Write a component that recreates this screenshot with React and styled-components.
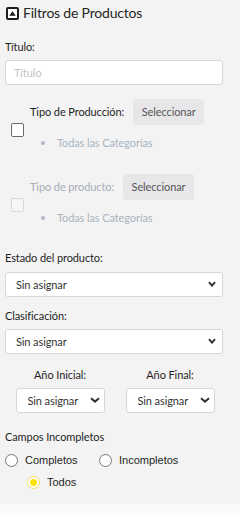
import React from "react";
import styled, { createGlobalStyle } from "styled-components";

const Global = createGlobalStyle`
  html, body { margin: 0; padding: 0; background: #fafafa; }
  body { font-family: Lato, "Noto Sans", sans-serif; }
  * { box-sizing: border-box; }
`;

const Panel = styled.div`
  width: 240px;
  height: 504px;
  background: #f3f3f3;
  display: flex;
  flex-direction: column;
  padding: 0 5px 0 5px;
  color: #1f1f1f;
  font-size: 11px;
  line-height: 14px;
  letter-spacing: -0.1px;
`;

const Header = styled.div`
  display: flex;
  align-items: center;
  gap: 4px;
  height: 26px;
  padding-left: 1px;
  font-size: 14px;
  letter-spacing: -0.2px;
  color: #262626;
`;

const IconBox = styled.span`
  width: 13px;
  height: 13px;
  border: 2px solid #1e1e1e;
  border-radius: 2px;
  display: flex;
  align-items: center;
  justify-content: center;
  background: #fff;
`;

const Label = styled.div`
  color: #1f1f1f;
  margin-top: ${(p) => p.$mt || 0}px;
  margin-bottom: ${(p) => p.$mb || 0}px;
`;

const TextInput = styled.input`
  width: 218px;
  height: 25px;
  border: 1px solid #d6d6d6;
  border-radius: 3px;
  background: #fff;
  padding: 0 8px;
  font-family: inherit;
  font-size: 11px;
  &::placeholder { color: #c4c4c4; }
`;

const Group = styled.div`
  display: flex;
  align-items: center;
  margin-top: ${(p) => p.$mt}px;
`;

const Check = styled.span`
  width: 13px;
  height: 14px;
  margin-left: 6px;
  margin-top: 11px;
  border: 1px solid ${(p) => (p.$disabled ? "#d8d8d8" : "#6a6a6a")};
  border-radius: 2px;
  background: ${(p) => (p.$disabled ? "#f6f6f6" : "#fff")};
  flex: none;
`;

const GroupBody = styled.div`
  display: flex;
  flex-direction: column;
  margin-left: 6px;
`;

const GroupHead = styled.div`
  display: flex;
  align-items: center;
  gap: 9px;
  color: ${(p) => (p.$disabled ? "#a8adb5" : "#1f1f1f")};
`;

const SelBtn = styled.span`
  display: inline-flex;
  align-items: center;
  justify-content: center;
  width: 71px;
  height: 26px;
  background: #e7e7ea;
  border-radius: 3px;
  color: #555;
`;

const Bullet = styled.div`
  display: flex;
  align-items: center;
  margin-top: 11px;
  color: #a9b3c0;
  &::before {
    content: "";
    width: 4px;
    height: 4px;
    border-radius: 50%;
    background: #b0b8c4;
    margin-left: 11px;
    margin-right: 12px;
  }
`;

const SelectWrap = styled.div`
  position: relative;
  width: ${(p) => p.$w}px;
`;

const Select = styled.select`
  appearance: none;
  -webkit-appearance: none;
  width: 100%;
  height: 25px;
  border: 1px solid #d6d6d6;
  border-radius: 3px;
  background: #fff;
  font-family: inherit;
  font-size: 11px;
  letter-spacing: -0.1px;
  color: #333;
  padding: 0 0 0 ${(p) => p.$pl || 10}px;
  outline: none;
`;

const Chevron = styled.svg`
  position: absolute;
  right: ${(p) => p.$r}px;
  top: 9px;
  pointer-events: none;
`;

const Years = styled.div`
  display: grid;
  grid-template-columns: 110px 110px;
  margin-top: 14px;
`;

const YearCol = styled.div`
  display: flex;
  flex-direction: column;
  align-items: center;
  gap: 6px;
`;

const Radios = styled.div`
  display: grid;
  grid-template-columns: 94px 100px;
  row-gap: 8px;
  margin-top: 9px;
  font-family: "Liberation Sans", Arial, sans-serif;
  font-size: 11px;
  letter-spacing: 0;
  color: #1f1f1f;
`;

const RadioItem = styled.label`
  display: flex;
  align-items: center;
  gap: 7px;
  grid-column: ${(p) => p.$col || "auto"};
  padding-left: ${(p) => p.$pl || 0}px;
`;

const RadioDot = styled.span`
  width: 13px;
  height: 13px;
  border-radius: 50%;
  border: 1px solid ${(p) => (p.$on ? "#f2dc5a" : "#777")};
  background: #fff;
  display: flex;
  align-items: center;
  justify-content: center;
  &::after {
    content: "";
    display: ${(p) => (p.$on ? "block" : "none")};
    width: 7px;
    height: 7px;
    border-radius: 50%;
    background: #ffe10a;
  }
`;

function SelectBox({ w, pl, r = 7, cw = 8 }) {
  return (
    <SelectWrap $w={w}>
      <Select $pl={pl} defaultValue="x">
        <option value="x">Sin asignar</option>
      </Select>
      <Chevron $r={r} width={cw} height="6" viewBox={`0 0 ${cw} 6`}>
        <path d={`M1 1.2 L${cw / 2} 4.6 L${cw - 1} 1.2`} fill="none" stroke="#333" strokeWidth="2" />
      </Chevron>
    </SelectWrap>
  );
}

export default function App() {
  return (
    <>
      <Global />
      <Panel>
        <Header>
          <IconBox>
            <svg width="7" height="5" viewBox="0 0 7 5">
              <path d="M3.5 0.3 L6.8 4.7 L0.2 4.7 Z" fill="#1e1e1e" />
            </svg>
          </IconBox>
          Filtros de Productos
        </Header>
        <Label $mt={14} $mb={6}>Título:</Label>
        <TextInput placeholder="Título" />
        <Group $mt={14}>
          <Check />
          <GroupBody>
            <GroupHead>
              Tipo de Producción:
              <SelBtn>Seleccionar</SelBtn>
            </GroupHead>
            <Bullet>Todas las Categorías</Bullet>
          </GroupBody>
        </Group>
        <Group $mt={24}>
          <Check $disabled />
          <GroupBody>
            <GroupHead $disabled>
              Tipo de producto:
              <SelBtn>Seleccionar</SelBtn>
            </GroupHead>
            <Bullet>Todas las Categorías</Bullet>
          </GroupBody>
        </Group>
        <Label $mt={26} $mb={7}>Estado del producto:</Label>
        <SelectBox w={218} />
        <Label $mt={12} $mb={6}>Clasificación:</Label>
        <SelectBox w={218} />
        <Years>
          <YearCol>
            <Label>Año Inicial:</Label>
            <SelectBox w={89} pl={11} r={5} cw={10} />
          </YearCol>
          <YearCol>
            <Label>Año Final:</Label>
            <SelectBox w={89} pl={11} r={5} cw={10} />
          </YearCol>
        </Years>
        <Label $mt={17}>Campos Incompletos</Label>
        <Radios>
          <RadioItem><RadioDot />Completos</RadioItem>
          <RadioItem><RadioDot />Incompletos</RadioItem>
          <RadioItem $col="1 / 3" $pl={22}><RadioDot $on />Todos</RadioItem>
        </Radios>
      </Panel>
    </>
  );
}
